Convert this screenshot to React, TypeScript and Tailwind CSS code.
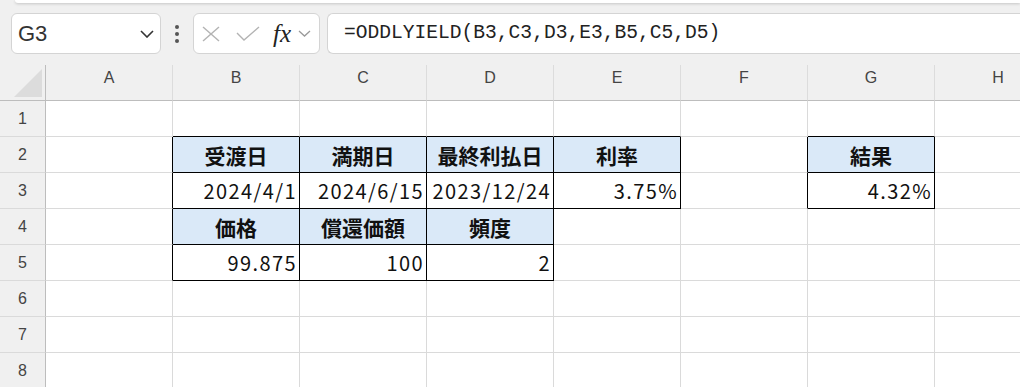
import React from 'react';

type CellData = { text?: string; head?: boolean };

const cols = ['A', 'B', 'C', 'D', 'E', 'F', 'G', 'H'];

// 表の中身（行番号 -> 列 -> 値）
const data: Record<number, Record<string, CellData>> = {
  2: {
    B: { text: '受渡日', head: true },
    C: { text: '満期日', head: true },
    D: { text: '最終利払日', head: true },
    E: { text: '利率', head: true },
    G: { text: '結果', head: true },
  },
  3: {
    B: { text: '2024/4/1' },
    C: { text: '2024/6/15' },
    D: { text: '2023/12/24' },
    E: { text: '3.75%' },
    G: { text: '4.32%' },
  },
  4: {
    B: { text: '価格', head: true },
    C: { text: '償還価額', head: true },
    D: { text: '頻度', head: true },
  },
  5: {
    B: { text: '99.875' },
    C: { text: '100' },
    D: { text: '2' },
  },
};

const inTable = (r: number, c: string) => !!data[r]?.[c];

function Cell({ row, col }: { row: number; col: string }) {
  const idx = cols.indexOf(col);
  const next = cols[idx + 1];
  const cell = data[row]?.[col];
  const blackRight = inTable(row, col) || (next ? inTable(row, next) : false);
  const blackBottom = inTable(row, col) || inTable(row + 1, col);

  return (
    <div
      className={`flex items-center border-r border-b ${
        blackRight ? 'border-r-black' : 'border-r-[#dadada]'
      } ${blackBottom ? 'border-b-black' : 'border-b-[#dadada]'} ${
        cell?.head ? 'bg-[#dae9f8] justify-center font-bold' : 'bg-white justify-end pr-[2px]'
      }`}
    >
      {cell &&
        (cell.head ? (
          <span className="text-[21px] leading-[24px] text-[#111] whitespace-nowrap">{cell.text}</span>
        ) : (
          <span className="text-[20px] leading-[24px] tracking-[1.4px] text-[#111] whitespace-nowrap">{cell.text}</span>
        ))}
    </div>
  );
}

export default function App() {
  const rows = [1, 2, 3, 4, 5, 6, 7, 8];

  return (
    <div
      className="w-[1020px] h-[387px] overflow-hidden bg-[#f0f0f0]"
      style={{ fontFamily: '"Noto Sans CJK JP", "Noto Sans", sans-serif' }}
    >
      {/* 上のリボンの端 */}
      <div className="h-[3px] ml-[15px] bg-white rounded-bl-[8px] shadow-[0_1px_3px_rgba(0,0,0,0.18)]" />

      {/* 数式バー */}
      <div className="flex items-center h-[41px] mt-[10px] pl-[11px]">
        <div className="w-[150px] h-full bg-white border border-[#d4d4d4] rounded-[6px] flex items-center justify-between pl-[6px] pr-[6px]">
          <span className="text-[22px] text-[#333]" style={{ fontFamily: '"Liberation Sans", Arial, sans-serif' }}>
            G3
          </span>
          <svg width="14" height="8" viewBox="0 0 14 8" fill="none" stroke="#333" strokeWidth="1.6">
            <polyline points="1,1 7,7 13,1" />
          </svg>
        </div>

        <div className="w-[32px] flex flex-col items-center gap-[3px]">
          <span className="w-[4px] h-[4px] rounded-full bg-[#555]" />
          <span className="w-[4px] h-[4px] rounded-full bg-[#555]" />
          <span className="w-[4px] h-[4px] rounded-full bg-[#555]" />
        </div>

        <div className="w-[127px] h-full bg-white border border-[#d4d4d4] rounded-[6px] flex items-center pl-[8px]">
          <svg width="18" height="16" viewBox="0 0 18 16" fill="none" stroke="#b3b3b3" strokeWidth="1.4">
            <line x1="1" y1="1" x2="17" y2="15" />
            <line x1="17" y1="1" x2="1" y2="15" />
          </svg>
          <svg className="ml-[16px]" width="24" height="15" viewBox="0 0 24 15" fill="none" stroke="#b3b3b3" strokeWidth="1.4">
            <polyline points="1,7 8,14 23,1" />
          </svg>
          <span
            className="ml-[13px] text-[25px] italic leading-none text-[#222]"
            style={{ fontFamily: '"Liberation Serif", "DejaVu Serif", serif' }}
          >
            fx
          </span>
          <svg className="ml-[7px]" width="13" height="7" viewBox="0 0 13 7" fill="none" stroke="#9a9a9a" strokeWidth="1.3">
            <polyline points="1,1 6.5,6 12,1" />
          </svg>
        </div>

        <div className="flex-1 ml-[7px] h-full bg-white border border-[#d4d4d4] border-r-0 rounded-l-[6px] flex items-center pl-[16px]">
          <span
            className="text-[19.6px] text-[#222] whitespace-nowrap"
            style={{ fontFamily: '"Liberation Mono", "DejaVu Sans Mono", monospace' }}
          >
            =ODDLYIELD(B3,C3,D3,E3,B5,C5,D5)
          </span>
        </div>
      </div>

      {/* シート */}
      <div className="mt-[11px] grid grid-cols-[46px_repeat(8,127px)] auto-rows-[36px]">
        {/* 左上の角 */}
        <div className="relative border-r border-b border-r-[#bdbdbd] border-b-[#bdbdbd]">
          <svg className="absolute left-[14px] top-[4px]" width="28" height="28" viewBox="0 0 28 28">
            <polygon points="28,0 28,28 0,28" fill="#dcdcdc" />
          </svg>
        </div>
        {cols.map((c) => (
          <div
            key={c}
            className="flex justify-center pt-[5px] border-r border-b border-r-[#dcdcdc] border-b-[#bdbdbd] text-[16px] leading-[16px] text-[#444]"
            style={{ fontFamily: '"Liberation Sans", Arial, sans-serif' }}
          >
            {c}
          </div>
        ))}

        {rows.map((r) => (
          <React.Fragment key={r}>
            <div
              className="flex items-center justify-center border-r border-b border-r-[#bdbdbd] border-b-[#dadada] text-[16px] text-[#444]"
              style={{ fontFamily: '"Liberation Sans", Arial, sans-serif' }}
            >
              {r}
            </div>
            {cols.map((c) => (
              <Cell key={c} row={r} col={c} />
            ))}
          </React.Fragment>
        ))}
      </div>
    </div>
  );
}
